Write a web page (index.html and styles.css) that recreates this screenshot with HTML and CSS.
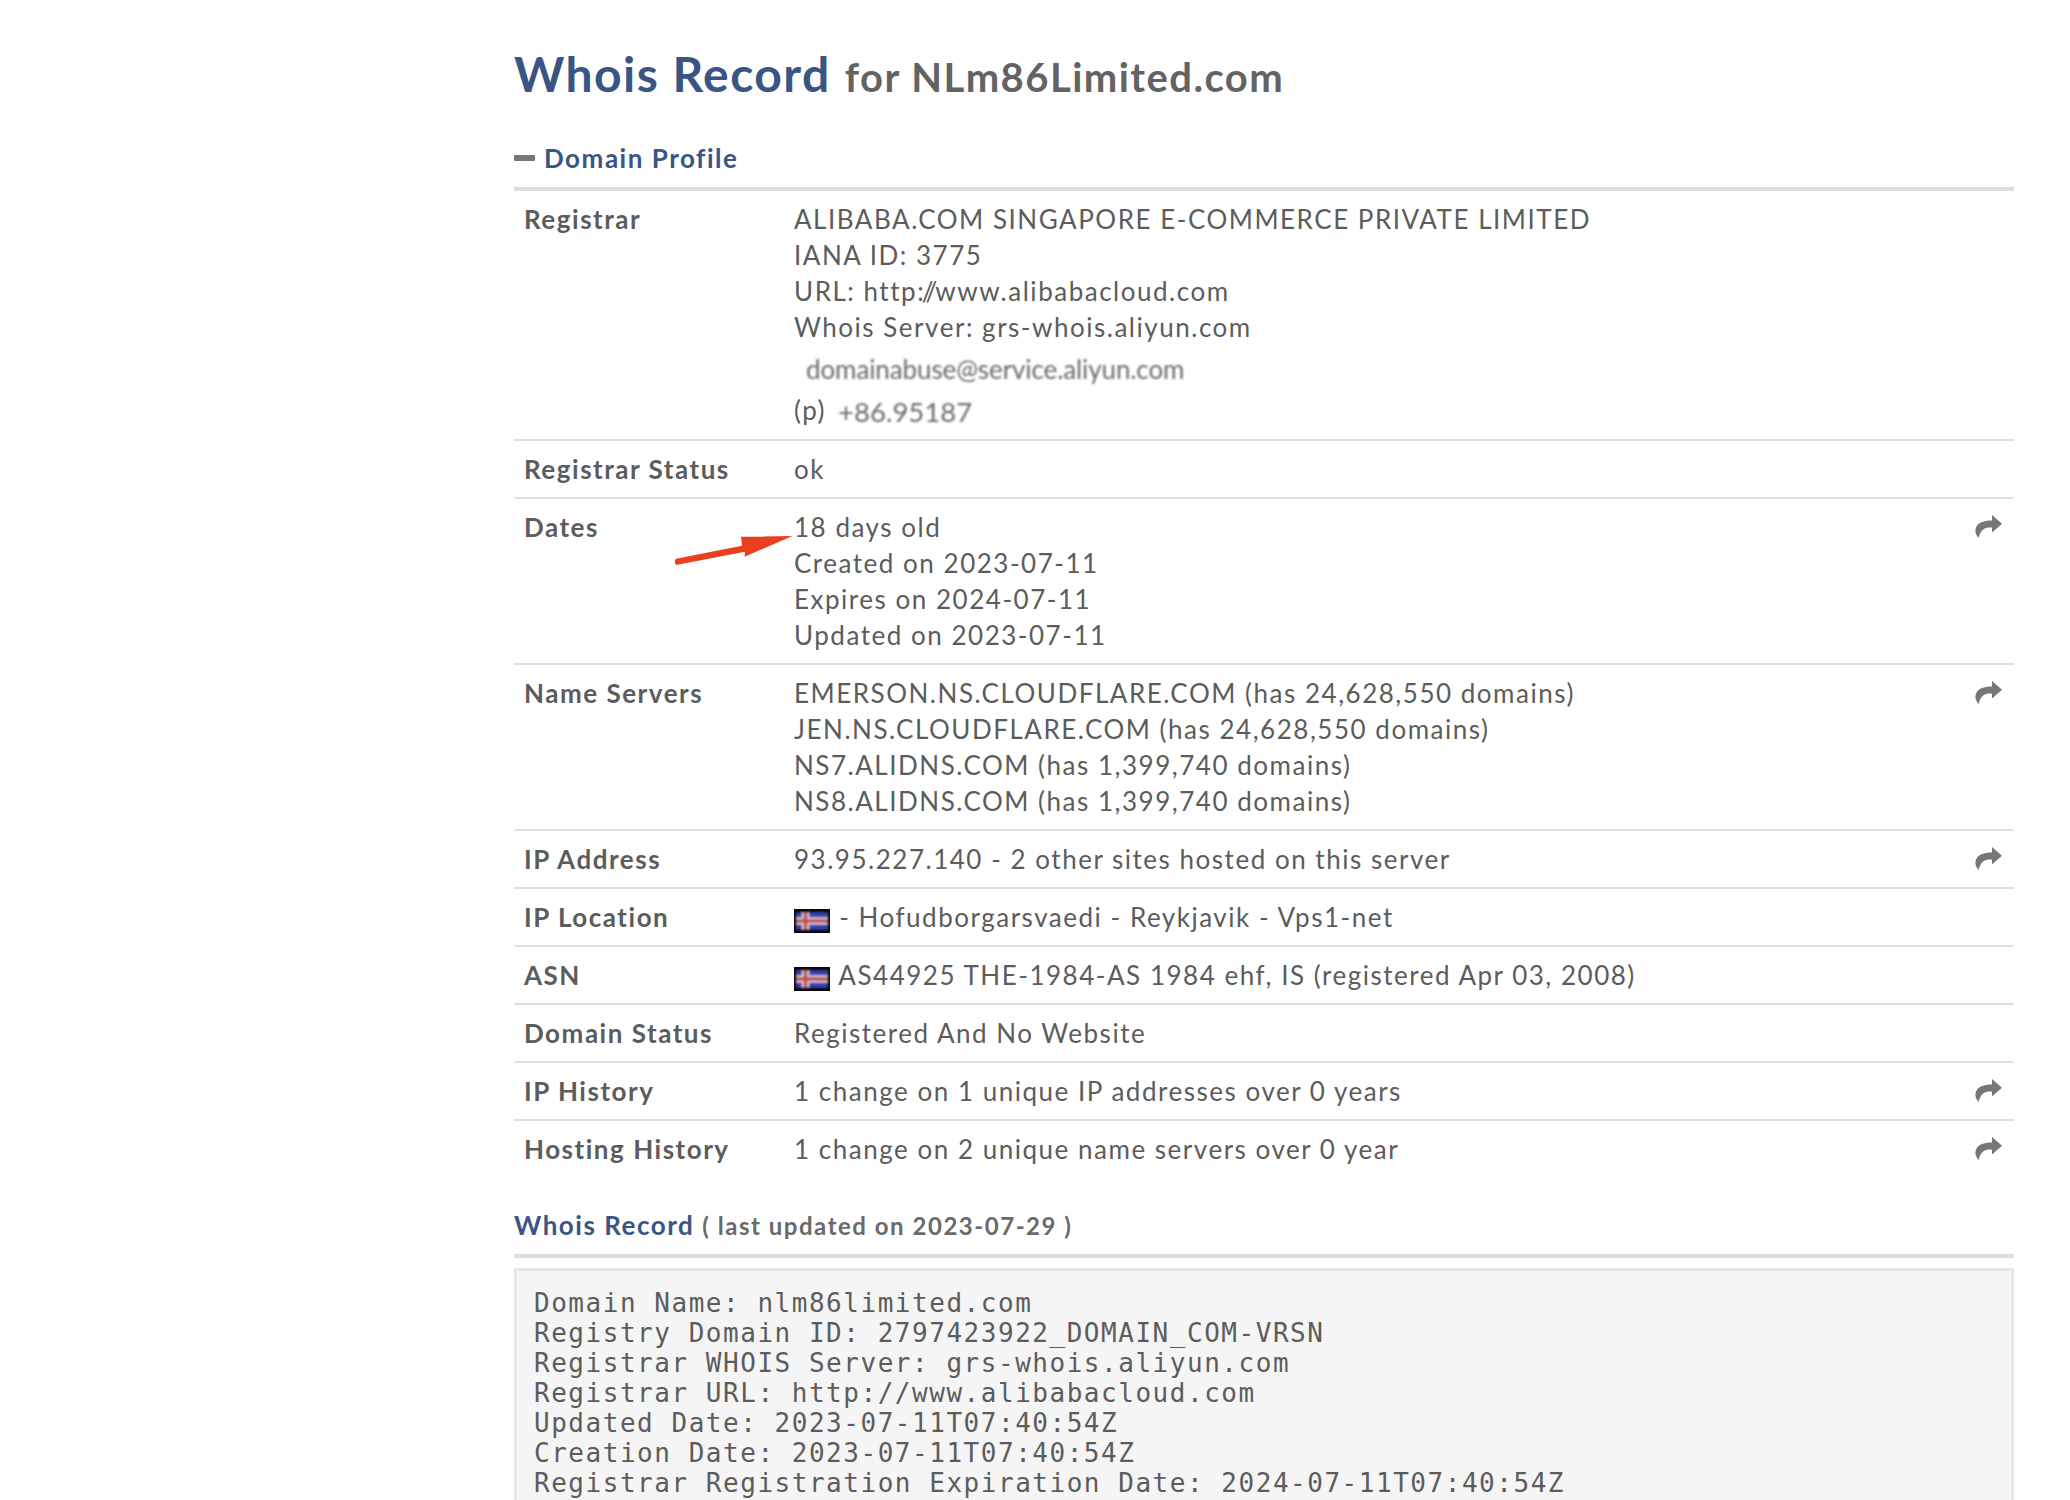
FILE: index.html
```html
<!DOCTYPE html>
<html lang="en">
<head>
<meta charset="utf-8">
<title>Whois Record for NLm86Limited.com</title>
<link rel="stylesheet" href="styles.css">
</head>
<body>
<svg class="defs" width="0" height="0" aria-hidden="true">
  <defs>
    <filter id="soft" x="-10%" y="-10%" width="120%" height="120%">
      <feGaussianBlur stdDeviation="0.9"/>
    </filter>
    <symbol id="share" viewBox="0 0 27 23">
      <path d="M17 0 L27 8.8 L17 17.5 V12.5 C11 12 6 13.5 3.5 23 C1 20 0 17.5 0.5 14.5 C1.5 8 8 5.5 17 5.5 Z"/>
    </symbol>
    <symbol id="flag" viewBox="0 0 36 24">
      <rect width="36" height="24" fill="#05050a"/>
      <g filter="url(#soft)">
        <rect x="2" y="3" width="32" height="18" fill="#3241a8"/>
        <rect x="8" y="3" width="7" height="18" fill="#e6dfe6"/>
        <rect x="2" y="8.5" width="32" height="7" fill="#e6dfe6"/>
        <rect x="9.5" y="3" width="4" height="18" fill="#c4504f"/>
        <rect x="2" y="10" width="32" height="4" fill="#c4504f"/>
      </g>
    </symbol>
  </defs>
</svg>
<main class="page">
  <h1 class="title"><span class="title-main">Whois Record</span><small class="title-sub">for NLm86Limited.com</small></h1>

  <h2 class="section-head"><span class="minus"></span>Domain Profile</h2>

  <section class="profile">
    <div class="row">
      <div class="label">Registrar</div>
      <div class="value">
        <div>ALIBABA.COM SINGAPORE E-COMMERCE PRIVATE LIMITED</div>
        <div>IANA ID: 3775</div>
        <div>URL: http<span class="tight">://</span>www.alibabacloud.com</div>
        <div>Whois Server: grs-whois.aliyun.com</div>
        <div class="email"><span class="blurred">domainabuse@service.aliyun.com</span></div>
        <div class="phone"><span class="phone-tag">(p)</span><span class="blurred num">+86.95187</span></div>
      </div>
    </div>
    <div class="row">
      <div class="label">Registrar Status</div>
      <div class="value">ok</div>
    </div>
    <div class="row">
      <div class="label">Dates</div>
      <div class="value">
        <div>18 days old</div>
        <div>Created on 2023-07-11</div>
        <div>Expires on 2024-07-11</div>
        <div>Updated on 2023-07-11</div>
      </div>
      <svg class="share"><use href="#share"/></svg>
      <svg class="arrow" viewBox="0 0 122 40" aria-hidden="true">
        <path d="M119.4 6 L68 6.7 L69 15.7 L3 28.7 Q0.5 31.5 3 35 L72 21.7 L71.6 26.7 Z"/>
      </svg>
    </div>
    <div class="row">
      <div class="label">Name Servers</div>
      <div class="value">
        <div>EMERSON.NS.CLOUDFLARE.COM (has 24,628,550 domains)</div>
        <div>JEN.NS.CLOUDFLARE.COM (has 24,628,550 domains)</div>
        <div>NS7.ALIDNS.COM (has 1,399,740 domains)</div>
        <div>NS8.ALIDNS.COM (has 1,399,740 domains)</div>
      </div>
      <svg class="share"><use href="#share"/></svg>
    </div>
    <div class="row">
      <div class="label">IP Address</div>
      <div class="value">93.95.227.140 - 2 other sites hosted on this server</div>
      <svg class="share"><use href="#share"/></svg>
    </div>
    <div class="row">
      <div class="label">IP Location</div>
      <div class="value"><svg class="flag"><use href="#flag"/></svg> - Hofudborgarsvaedi - Reykjavik - Vps1-net</div>
    </div>
    <div class="row">
      <div class="label">ASN</div>
      <div class="value"><svg class="flag"><use href="#flag"/></svg> AS44925 THE-1984-AS 1984 ehf, IS (registered Apr 03, 2008)</div>
    </div>
    <div class="row">
      <div class="label">Domain Status</div>
      <div class="value">Registered And No Website</div>
    </div>
    <div class="row">
      <div class="label">IP History</div>
      <div class="value">1 change on 1 unique IP addresses over 0 years</div>
      <svg class="share"><use href="#share"/></svg>
    </div>
    <div class="row">
      <div class="label">Hosting History</div>
      <div class="value">1 change on 2 unique name servers over 0 year</div>
      <svg class="share"><use href="#share"/></svg>
    </div>
  </section>

  <h2 class="record-head"><span class="record-title">Whois Record</span> <small class="record-sub">( last updated on 2023-07-29 )</small></h2>

  <pre class="raw">Domain Name: nlm86limited.com
Registry Domain ID: 2797423922_DOMAIN_COM-VRSN
Registrar WHOIS Server: grs-whois.aliyun.com
Registrar URL: http://www.alibabacloud.com
Updated Date: 2023-07-11T07:40:54Z
Creation Date: 2023-07-11T07:40:54Z
Registrar Registration Expiration Date: 2024-07-11T07:40:54Z</pre>
</main>
</body>
</html>
```
FILE: styles.css
```css
html, body {
  margin: 0;
  height: 1500px;
  overflow: hidden;
  background: #fff;
}
body {
  font-family: Lato, "Liberation Sans", sans-serif;
  color: #5c5c5c;
  font-size: 26px;
  line-height: 36px;
  letter-spacing: 1.52px;
}
.defs { position: absolute; }
.page {
  margin-left: 514px;
  width: 1500px;
  padding-top: 41px;
}
.title {
  margin: 0;
  display: flex;
  align-items: baseline;
  gap: 14px;
  font-weight: 700;
  line-height: 66px;
  letter-spacing: 1.45px;
}
.title-main { font-size: 48px; color: #3a5583; }
.title-sub { font-size: 40px; color: #636363; }
.section-head {
  margin: 30px 0 0;
  padding-bottom: 11px;
  border-bottom: 4px solid #ddd;
  font-size: 26px;
  font-weight: 700;
  line-height: 36px;
  color: #3a5583;
  display: flex;
  align-items: center;
}
.minus {
  width: 21px;
  height: 6px;
  border-radius: 1px;
  background: #777;
  margin-right: 9px;
}
.row {
  position: relative;
  display: flex;
  padding: 10px;
  border-bottom: 2px solid #ddd;
}
.row:first-child { padding-bottom: 9px; }
.row:last-child { border-bottom: 0; }
.label {
  flex: 0 0 270px;
  font-weight: 700;
}
.value { flex: 1; }
.tight { letter-spacing: -2px; }
.blurred {
  filter: blur(0.8px);
  color: #6a6a6a;
  letter-spacing: -0.1px;
}
.email { line-height: 48px; padding-left: 12px; }
.phone { display: flex; align-items: center; line-height: 37px; height: 37px; }
.phone-tag { margin-top: -3px; }
.num { margin-left: 12px; font-size: 27.5px; letter-spacing: 0; }
.share {
  position: absolute;
  top: 16px;
  right: 12px;
  width: 27px;
  height: 23px;
  fill: #777;
}
.flag {
  width: 36px;
  height: 24px;
  vertical-align: -6px;
  margin-right: 1px;
}
.arrow {
  position: absolute;
  left: 159px;
  top: 31px;
  width: 122px;
  height: 40px;
  fill: #e8401f;
}
.record-head {
  margin: 30px 0 0;
  padding-bottom: 10px;
  border-bottom: 4px solid #ddd;
  font-weight: 700;
  font-size: 26px;
  line-height: 36px;
}
.record-title { color: #3a5583; }
.record-sub { font-size: 24px; color: #6a6a6a; }
.raw {
  margin: 10px 0 0;
  padding: 17px 17px;
  background: #f5f5f5;
  border: 3px solid #e6e6e6;
  border-bottom: 0;
  font-family: "DejaVu Sans Mono", "Liberation Mono", monospace;
  font-size: 26px;
  line-height: 30px;
  letter-spacing: 1.53px;
  color: #5c5c5c;
  white-space: pre;
}
```
